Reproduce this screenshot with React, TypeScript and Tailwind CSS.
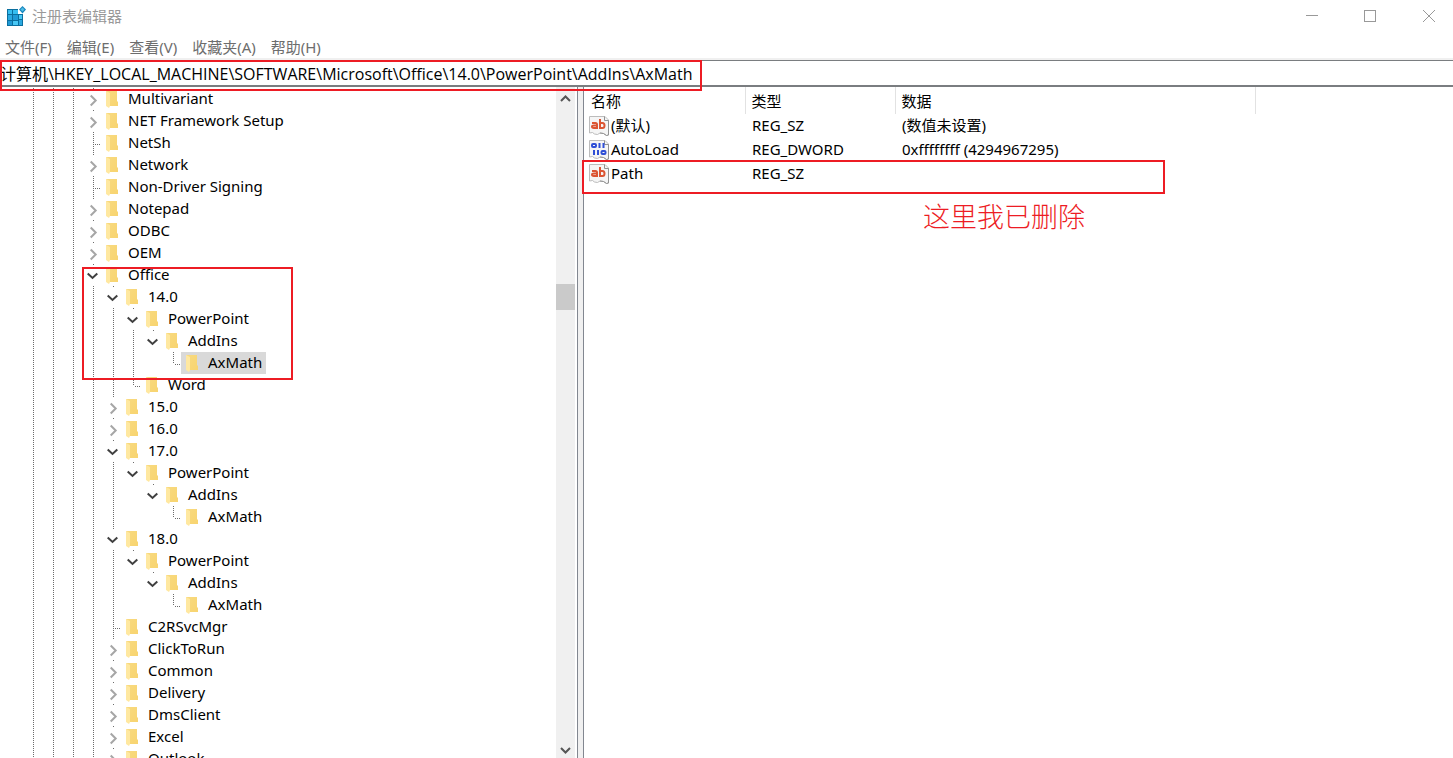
import React from "react";

type Kind = "open" | "closed" | "leaf" | "last";

interface TreeNode {
  name: string;
  // One character per ancestor column: "|" draws a guide line, "." leaves it empty.
  guides: string;
  kind: Kind;
  selected?: boolean;
}

const nodes: TreeNode[] = [
  { name: "Multivariant", guides: "|||", kind: "closed" },
  { name: "NET Framework Setup", guides: "|||", kind: "closed" },
  { name: "NetSh", guides: "|||", kind: "leaf" },
  { name: "Network", guides: "|||", kind: "closed" },
  { name: "Non-Driver Signing", guides: "|||", kind: "leaf" },
  { name: "Notepad", guides: "|||", kind: "closed" },
  { name: "ODBC", guides: "|||", kind: "closed" },
  { name: "OEM", guides: "|||", kind: "closed" },
  { name: "Office", guides: "|||", kind: "open" },
  { name: "14.0", guides: "||||", kind: "open" },
  { name: "PowerPoint", guides: "|||||", kind: "open" },
  { name: "AddIns", guides: "||||||", kind: "open" },
  { name: "AxMath", guides: "||||||.", kind: "last", selected: true },
  { name: "Word", guides: "|||||", kind: "last" },
  { name: "15.0", guides: "||||", kind: "closed" },
  { name: "16.0", guides: "||||", kind: "closed" },
  { name: "17.0", guides: "||||", kind: "open" },
  { name: "PowerPoint", guides: "|||||", kind: "open" },
  { name: "AddIns", guides: "|||||.", kind: "open" },
  { name: "AxMath", guides: "|||||..", kind: "last" },
  { name: "18.0", guides: "||||", kind: "open" },
  { name: "PowerPoint", guides: "|||||", kind: "open" },
  { name: "AddIns", guides: "|||||.", kind: "open" },
  { name: "AxMath", guides: "|||||..", kind: "last" },
  { name: "C2RSvcMgr", guides: "||||", kind: "leaf" },
  { name: "ClickToRun", guides: "||||", kind: "closed" },
  { name: "Common", guides: "||||", kind: "closed" },
  { name: "Delivery", guides: "||||", kind: "closed" },
  { name: "DmsClient", guides: "||||", kind: "closed" },
  { name: "Excel", guides: "||||", kind: "closed" },
  { name: "Outlook", guides: "||||", kind: "closed" },
];

const values = [
  { name: "(默认)", type: "REG_SZ", data: "(数值未设置)", binary: false },
  { name: "AutoLoad", type: "REG_DWORD", data: "0xffffffff (4294967295)", binary: true },
  { name: "Path", type: "REG_SZ", data: "", binary: false },
];

const menus = ["文件(F)", "编辑(E)", "查看(V)", "收藏夹(A)", "帮助(H)"];

function RegeditIcon() {
  return (
    <svg width="20" height="20" viewBox="0 0 20 20" aria-hidden="true">
      <path d="M1 3h11v5h5v12H1z" fill="#0b6f9f" />
      <path d="M2 4h4v4H2zM7 4h5v4H7z" fill="#35bdf0" />
      <path d="M2 9h4v5H2zM13 14h3v5h-3z" fill="#2ba9e0" />
      <path d="M7 9h5v5H7zM2 15h4v4H2z" fill="#1f9ad6" />
      <path d="M13 9h3v4h-3zM7 15h5v4H7z" fill="#49c8f5" />
      <path d="M16.500 0l3.500 3.500-3.500 4-3.500-4z" fill="#1686bd" />
      <path d="M16.500 1.500l2 2-2 2-2-2z" fill="#4fbce6" />
    </svg>
  );
}

function FolderIcon() {
  return (
    <svg width="12" height="20" viewBox="0 0 12 20" aria-hidden="true" className="shrink-0">
      <defs>
        <linearGradient id="folderBack" x1="0" y1="0" x2="1" y2="1">
          <stop offset="0" stopColor="#f8da80" />
          <stop offset="1" stopColor="#f8d470" />
        </linearGradient>
      </defs>
      <path d="M0 2h11v10l1 1v4H2z" fill="url(#folderBack)" />
      <path d="M0 2l4 2v13l-1 2-3-2z" fill="#ffe8a0" />
    </svg>
  );
}

function ValueIcon({ binary }: { binary: boolean }) {
  return (
    <svg width="20" height="20" viewBox="0 0 20 20" aria-hidden="true" className="shrink-0">
      <path
        d="M.5.5h15.500l3.500 3.500v15l-2 .5-3-2-3.500-.5-2.500 1.500-3-.5-2-1.500-3 .5z"
        fill="#f5f5f5"
        stroke="#bcbcbc"
      />
      <path d="M15.500.5v4h4v14.500l-2 .5-3-2-3.500-.5" fill="none" stroke="#929292" />
      {binary ? (
        <g fill="none" stroke="#2f4fd6" strokeWidth="2">
          <rect x="3" y="4" width="4" height="3" rx="1" />
          <path d="M10.500 3v5M14.500 3v5M5 10v5M9 10v5" />
          <rect x="12.500" y="11" width="4" height="3" rx="1" />
        </g>
      ) : (
        <g fill="none" stroke="#dc5533" strokeWidth="2">
          <path d="M3 7h3.500q1.500 0 1.500 1.500V13" />
          <path d="M8 9.500H5q-2 0-2 1.300T5 12h3" />
          <path d="M11 3v10M11 7h2.500q2 0 2 2.500t-2 2.500H11" />
        </g>
      )}
    </svg>
  );
}

function VerticalDots({ className }: { className: string }) {
  return (
    <span
      className={`block w-px bg-[repeating-linear-gradient(to_bottom,#6c6c6c_0,#6c6c6c_1px,transparent_1px,transparent_2px)] ${className}`}
    />
  );
}

function Junction({ kind, name }: { kind: Kind; name: string }) {
  if (kind === "open" || kind === "closed") {
    return (
      <button
        type="button"
        aria-label={`${kind === "open" ? "折叠" : "展开"} ${name}`}
        className="h-full w-[18px] shrink-0"
      >
        <svg width="18" height="22" viewBox="0 0 18 22" fill="none" aria-hidden="true" className="block">
          <path d="M10 0h1v1h-1z" fill="#6c6c6c" />
          {kind === "open" ? (
            <path d="M4.700 9.500l4.800 4.500 4.800-4.500" stroke="#404040" strokeWidth="2" />
          ) : (
            <path d="M7.700 7.500l5 5-5 5" stroke="#a6a6a6" strokeWidth="2" />
          )}
        </svg>
      </button>
    );
  }
  return (
    <span className="flex h-full w-[18px] shrink-0 items-start pl-[10px]">
      <VerticalDots className={kind === "last" ? "h-3" : "h-full"} />
      <span className="mt-3 h-px flex-1 bg-[repeating-linear-gradient(to_right,transparent_0,transparent_1px,#6c6c6c_1px,#6c6c6c_2px)]" />
    </span>
  );
}

function TreeRow({ node }: { node: TreeNode }) {
  return (
    <li
      role="treeitem"
      aria-level={node.guides.length + 1}
      aria-selected={!!node.selected}
      className="flex h-[22px] items-center"
    >
      {node.guides.split("").map((g, i) => (
        <span key={i} className="flex h-full w-5 shrink-0 pl-[10px]">
          {g === "|" && <VerticalDots className="h-full" />}
        </span>
      ))}
      <Junction kind={node.kind} name={node.name} />
      <span className={`flex h-full items-center gap-[10px] pr-1 pl-[5px] ${node.selected ? "bg-[#d9d9d9]" : ""}`}>
        <FolderIcon />
        <span className="pb-[2px] whitespace-nowrap">{node.name}</span>
      </span>
    </li>
  );
}

function ScrollButton({ up }: { up: boolean }) {
  return (
    <button
      type="button"
      aria-label={up ? "向上滚动" : "向下滚动"}
      className="flex h-4 w-full shrink-0 items-center justify-center"
    >
      <svg width="11" height="8" viewBox="0 0 11 8" fill="none" aria-hidden="true">
        <path d={up ? "M1 6l4.500-4.500L10 6" : "M1 2l4.500 4.500L10 2"} stroke="#555" strokeWidth="2" />
      </svg>
    </button>
  );
}

export default function App() {
  return (
    <div className="flex h-screen flex-col overflow-hidden bg-white font-['Noto_Sans','Noto_Sans_CJK_SC',sans-serif] text-[15px] leading-[22px] text-black">
      <header className="flex h-[34px] shrink-0 items-start justify-between text-[#999]">
        <div className="flex h-8 items-center gap-[6px] pl-[6px]">
          <RegeditIcon />
          <h1>注册表编辑器</h1>
        </div>
        <div className="flex h-8 items-center">
          <button type="button" aria-label="最小化" className="flex h-full w-[58px] items-center justify-center">
            <svg width="12" height="12" viewBox="0 0 12 12"><path d="M0 5h12v1H0z" fill="#999" /></svg>
          </button>
          <button type="button" aria-label="最大化" className="flex h-full w-[58px] items-center justify-center">
            <svg width="12" height="12" viewBox="0 0 12 12"><rect x=".5" y=".5" width="11" height="11" fill="none" stroke="#999" /></svg>
          </button>
          <button type="button" aria-label="关闭" className="flex h-full w-[54px] items-center justify-center pl-[6px]">
            <svg width="12" height="12" viewBox="0 0 12 12"><path d="M0 0l12 12M12 0L0 12" stroke="#999" /></svg>
          </button>
        </div>
      </header>

      <nav className="flex h-[26px] shrink-0 items-center gap-[15px] border-b-2 border-[#f0f0f0] pt-[2px] pl-[5px] text-[#6d6d6d]">
        {menus.map((m) => (
          <button key={m} type="button" className="whitespace-nowrap">
            {m}
          </button>
        ))}
      </nav>

      <div className="relative shrink-0">
        <input
          aria-label="地址"
          defaultValue={"计算机\\HKEY_LOCAL_MACHINE\\SOFTWARE\\Microsoft\\Office\\14.0\\PowerPoint\\AddIns\\AxMath"}
          className="block h-[27px] w-full border-t border-b-2 border-[#7a7d80] bg-white pb-px font-['Open_Sans','Noto_Sans_CJK_SC',sans-serif] text-base leading-[22px] outline-none"
        />
        <div className="pointer-events-none absolute top-0 left-0 z-10 h-[31px] w-[702px] border-2 border-[#ed1c24]" />
      </div>

      <main className="flex min-h-0 flex-1 bg-[#f0f0f0]">
        <section className="flex w-[578px] shrink-0 border-r border-[#828790] bg-white">
          <div className="relative min-w-0 flex-1 overflow-hidden pt-px pl-[23px]">
            <ul role="tree" aria-label="注册表项">
              {nodes.map((n, i) => (
                <TreeRow key={i} node={n} />
              ))}
            </ul>
            <div className="pointer-events-none absolute top-[180px] left-[82px] h-[113px] w-[211px] border-2 border-[#ed1c24]" />
          </div>
          <div className="mr-[2px] flex w-[19px] shrink-0 flex-col bg-[#f0f0f0] pt-1">
            <ScrollButton up />
            <div className="min-h-0 flex-1 pt-[177px]">
              <div className="h-[26px] bg-[#cacaca]" />
            </div>
            <ScrollButton up={false} />
          </div>
        </section>

        <section className="relative ml-[5px] min-w-0 flex-1 border-l border-[#828790] bg-white">
          <table className="w-full table-fixed border-collapse text-left">
            <colgroup>
              <col className="w-[161px]" />
              <col className="w-[150px]" />
              <col className="w-[360px]" />
              <col />
            </colgroup>
            <thead>
              <tr className="h-[27px]">
                <th className="border-r border-[#e2e2e2] p-0 pl-[7px] font-normal">名称</th>
                <th className="border-r border-[#e2e2e2] p-0 pl-[6px] font-normal">类型</th>
                <th className="border-r border-[#e2e2e2] p-0 pl-[6px] font-normal">数据</th>
                <td />
              </tr>
            </thead>
            <tbody>
              {values.map((v) => (
                <tr key={v.name} className="h-6">
                  <td className="p-0 pl-[5px]">
                    <span className="flex items-center gap-[2px]">
                      <ValueIcon binary={v.binary} />
                      <span className="pb-[2px]">{v.name}</span>
                    </span>
                  </td>
                  <td className="p-0 pb-[2px] pl-[7px]">{v.type}</td>
                  <td className="p-0 pb-[2px] pl-[7px]">{v.data}</td>
                  <td />
                </tr>
              ))}
            </tbody>
          </table>
          <div className="pointer-events-none absolute top-[73px] -left-[2px] h-[34px] w-[583px] border-2 border-[#ed1c24]" />
          <p className="absolute top-[113px] left-[339px] font-['Noto_Sans_CJK_SC',sans-serif] text-[27px] leading-8 font-light whitespace-nowrap text-[#ed1c24]">
            这里我已删除
          </p>
        </section>
      </main>
    </div>
  );
}
